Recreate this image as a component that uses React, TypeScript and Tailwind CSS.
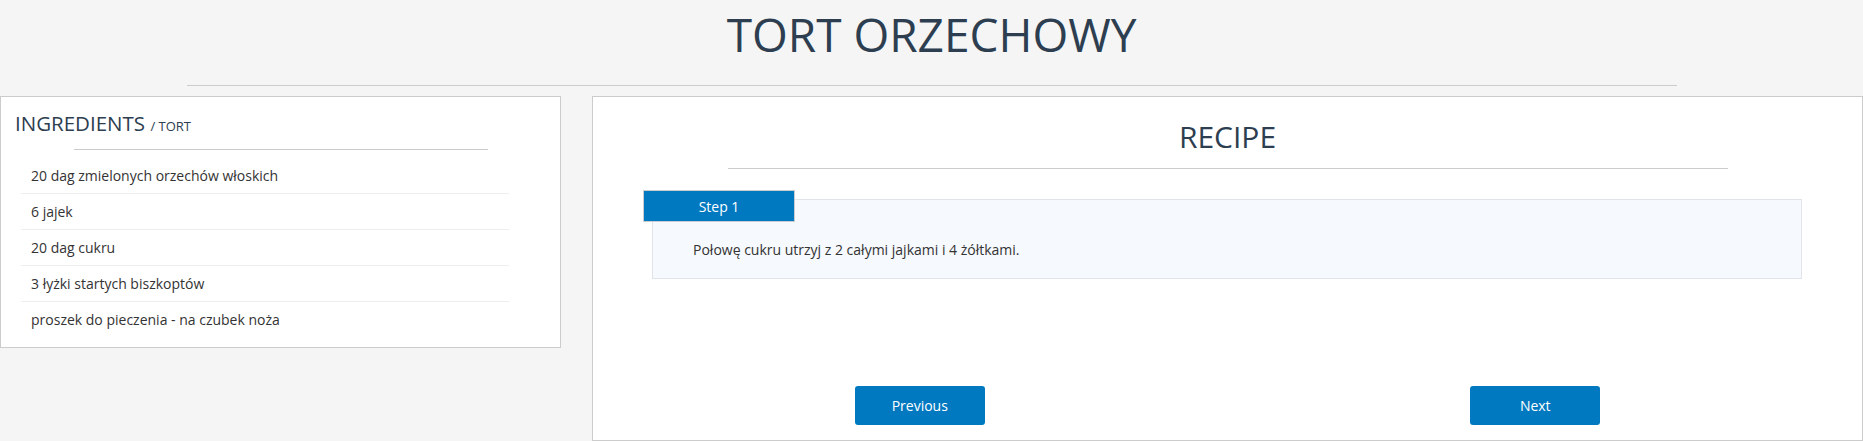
const ingredients = [
  "20 dag zmielonych orzechów włoskich",
  "6 jajek",
  "20 dag cukru",
  "3 łyżki startych biszkoptów",
  "proszek do pieczenia - na czubek noża",
];

export default function App() {
  return (
    <div className="min-h-[441px] bg-[#f5f5f5] font-['Open_Sans',sans-serif] text-[#333]">
      {/* Header */}
      <header className="pt-[6px]">
        <h1 className="text-center text-[46px] leading-[56px] font-normal text-[#2c3e50]">
          TORT ORZECHOWY
        </h1>
        <hr className="mx-auto mt-[23px] w-[1490px] border-0 border-t border-[#cccccc]" />
      </header>

      <div className="mt-[10px] flex items-start gap-[31px]">
        {/* Ingredients */}
        <section className="w-[561px] border border-[#cccccc] bg-white pt-[12px] pb-[10px]">
          <h2 className="pl-[14px] text-[20.5px] leading-[28px] text-[#2c3e50]">
            INGREDIENTS <span className="text-[13px]">/ TORT</span>
          </h2>
          <hr className="mx-auto mt-[9px] w-[414px] border-0 border-t border-[#cccccc]" />
          <ul className="mt-[8px] ml-[20px] w-[488px]">
            {ingredients.map((item, i) => (
              <li
                key={item}
                className={`pt-[8px] pb-[7px] pl-[10px] text-[14px] leading-[20px] ${
                  i < ingredients.length - 1 ? "border-b border-[#eeeeee]" : ""
                }`}
              >
                {item}
              </li>
            ))}
          </ul>
        </section>

        {/* Recipe */}
        <section className="flex h-[345px] flex-1 flex-col border border-[#cccccc] bg-white pt-[22px] pb-[15px]">
          <h2 className="text-center text-[30px] leading-[36px] text-[#2c3e50]">RECIPE</h2>
          <hr className="mx-auto mt-[13px] w-[1000px] border-0 border-t border-[#cccccc]" />

          <div className="relative mt-[30px] mr-[60px] ml-[59px] border border-[#e1e5ea] bg-[#f6f9fd] pt-[40px] pb-[18px] pl-[40px]">
            <div className="absolute -top-[10px] -left-[10px] flex h-[32px] w-[152px] items-center justify-center border border-[#c9ccd0] bg-[#0179c1] text-[14px] text-white">
              Step 1
            </div>
            <p className="text-[14px] leading-[20px]">Połowę cukru utrzyj z 2 całymi jajkami i 4 żółtkami.</p>
          </div>

          <div className="mt-auto grid grid-cols-2 px-[19px]">
            <div className="flex justify-center">
              <button className="h-[39px] w-[130px] rounded-[3px] bg-[#0179c1] text-[14px] text-white">
                Previous
              </button>
            </div>
            <div className="flex justify-center">
              <button className="h-[39px] w-[130px] rounded-[3px] bg-[#0179c1] text-[14px] text-white">
                Next
              </button>
            </div>
          </div>
        </section>
      </div>
    </div>
  );
}
